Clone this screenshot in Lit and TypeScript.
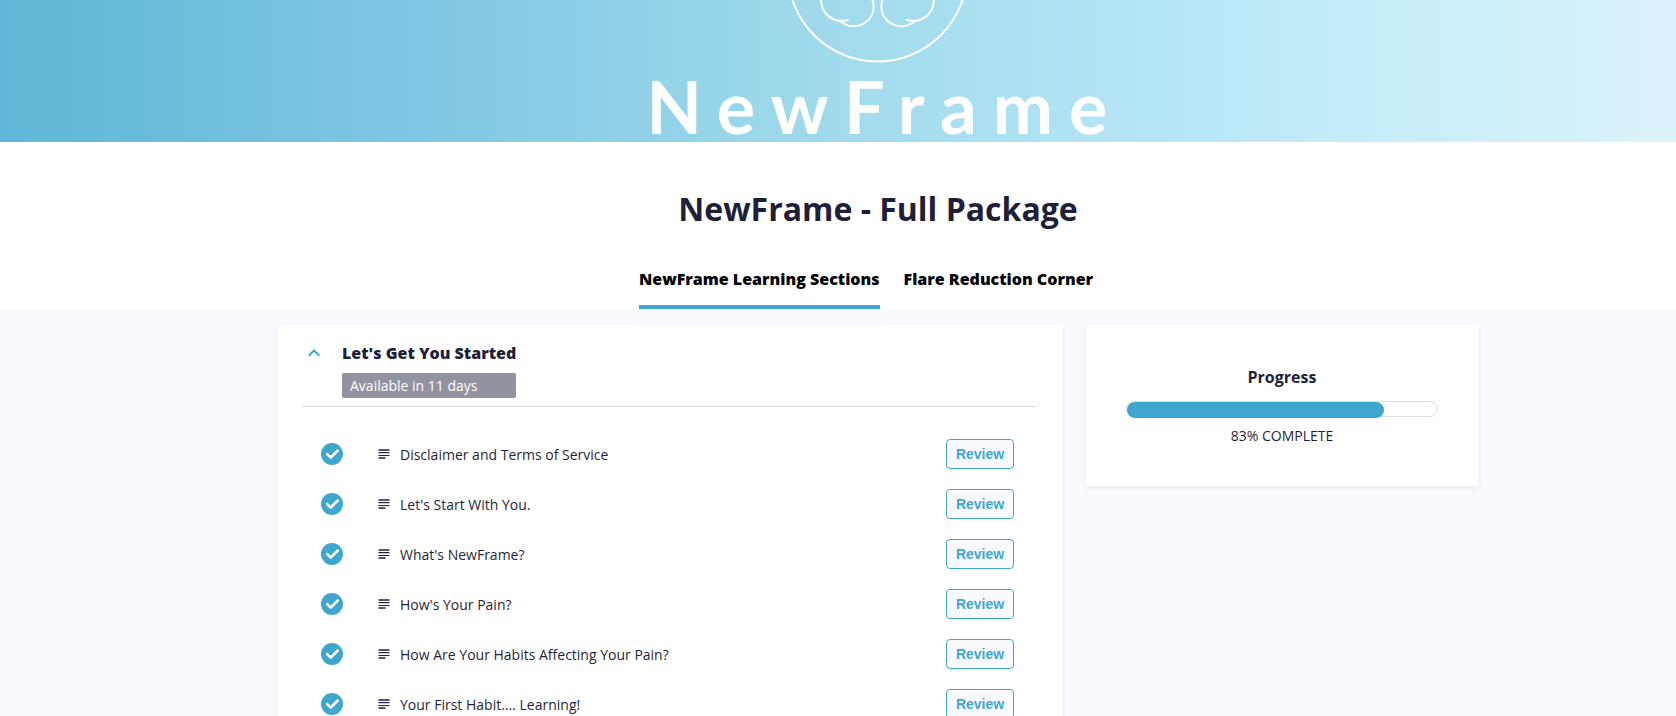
import { LitElement, html, css } from "lit";
import { customElement, property, state } from "lit/decorators.js";

const LESSONS = [
  "Disclaimer and Terms of Service",
  "Let's Start With You.",
  "What's NewFrame?",
  "How's Your Pain?",
  "How Are Your Habits Affecting Your Pain?",
  "Your First Habit.... Learning!",
];

@customElement("course-banner")
class CourseBanner extends LitElement {
  static styles = css`
    :host {
      display: flex;
      flex-direction: column;
      align-items: center;
      padding-left: 80px;
      color: #fff;
      background: linear-gradient(90deg, #5fb6d6 0%, #66bad9 5%, #8bcde6 34%, #9cd8ea 46%, #b9e8f6 72%, #c7edf9 83%, #dcf3fa 100%);
    }
    .emblem {
      display: block;
      flex: none;
      width: 180px;
      height: 70px;
    }
    .wordmark {
      font: 700 72px/72px Lato, sans-serif;
      letter-spacing: 16px;
      padding-left: 14px;
      white-space: nowrap;
    }
  `;

  render() {
    return html`
      <svg class="emblem" viewBox="0 0 180 70" fill="none" stroke="#fff" stroke-width="2" stroke-linecap="round" aria-hidden="true">
        <circle cx="89.500" cy="-28" r="89.500" />
        <path d="M33 0C33.500 13 44 24 60 20M53 22C68 32.500 87.500 22 85.500 4L84.500 0" />
        <path d="M146 0C145.500 13 135 24 119 20M126 22C111 32.500 91.500 22 93.500 4L94.500 0" />
      </svg>
      <div class="wordmark">NewFrame</div>
    `;
  }
}

@customElement("lesson-row")
class LessonRow extends LitElement {
  @property() name = "";

  static styles = css`
    :host {
      display: flex;
      align-items: center;
      height: 50px;
      padding: 0 24px 0 19px;
    }
    .done {
      flex: none;
      width: 22px;
      height: 22px;
      margin-right: 35px;
    }
    .kind {
      flex: none;
      width: 12px;
      height: 12px;
      margin-right: 10px;
    }
    .name {
      flex: 1;
      font-size: 14px;
      line-height: 20px;
      padding-top: 1px;
    }
    .review {
      box-sizing: border-box;
      width: 68px;
      height: 30px;
      padding: 0;
      border: 1px solid #3fa7ce;
      border-radius: 4px;
      background: #f9faff;
      color: #3fa7ce;
      font: 700 14px/28px "Liberation Sans", Arial, sans-serif;
      cursor: pointer;
    }
  `;

  render() {
    return html`
      <svg class="done" viewBox="0 0 22 22" role="img" aria-label="Completed">
        <circle cx="11" cy="11" r="11" fill="#3fa7ce" />
        <path d="M6.200 11.200L9.700 14.500L16.800 7.500" fill="none" stroke="#fff" stroke-width="2.500" stroke-linecap="round" stroke-linejoin="round" />
      </svg>
      <svg class="kind" viewBox="0 0 12 12" aria-hidden="true" fill="#1f1f39">
        <path d="M.5 1h11v2H.5z" opacity=".75" />
        <path d="M.5 4h11v1H.5zM.5 7h11v1H.5z" />
        <path d="M.5 5h11v1H.5z" opacity=".2" />
        <path d="M.5 9h7v2H.5z" opacity=".75" />
      </svg>
      <span class="name">${this.name}</span>
      <button class="review" type="button" aria-label="Review ${this.name}">Review</button>
    `;
  }
}

@customElement("progress-card")
class ProgressCard extends LitElement {
  @property({ type: Number }) value = 0;

  static styles = css`
    :host {
      display: block;
      box-sizing: border-box;
      padding: 40px;
      text-align: center;
      background: #fff;
      box-shadow: 0 2px 6px rgba(31, 31, 57, 0.07);
    }
    .title {
      margin: 0 0 12px;
      font-size: 16px;
      line-height: 24px;
      font-weight: 700;
    }
    .track {
      box-sizing: border-box;
      height: 16px;
      border: 1px solid #dfdfe2;
      border-radius: 8px;
    }
    .fill {
      height: 16px;
      border-radius: 8px;
      background: #3fa7ce;
    }
    .label {
      margin: 9px 0 0;
      font-size: 14px;
      line-height: 20px;
      text-transform: uppercase;
    }
  `;

  render() {
    return html`
      <h2 class="title" id="title">Progress</h2>
      <div class="track" role="progressbar" aria-labelledby="title" aria-valuemin="0" aria-valuemax="100" aria-valuenow=${this.value}>
        <div class="fill" style="width: ${this.value}%"></div>
      </div>
      <p class="label">${this.value}% Complete</p>
    `;
  }
}

@customElement("app-root")
class AppRoot extends LitElement {
  @state() private open = true;

  static styles = css`
    :host {
      display: block;
      min-height: 100vh;
      background: #f9faff;
      color: #1f1f39;
      font-family: "Open Sans", sans-serif;
    }
    .head {
      display: flex;
      flex-direction: column;
      align-items: center;
      padding: 43px 0 0 80px;
      background: #fff;
    }
    .title {
      margin: 0 0 29px;
      font-size: 32px;
      line-height: 48px;
      font-weight: 700;
    }
    .tabs {
      display: flex;
    }
    .tab {
      margin-right: 24px;
      padding: 5px 0 14px;
      border-bottom: 4px solid transparent;
      color: #000;
      font-size: 16px;
      line-height: 24px;
      font-weight: 800;
      text-decoration: none;
    }
    .tab.current {
      border-color: #3fa7ce;
    }
    .body {
      padding: 16px 0 0 80px;
    }
    .columns {
      display: grid;
      grid-template-columns: 2fr 1fr;
      gap: 24px;
      align-items: start;
      max-width: 1200px;
      margin: 0 auto;
    }
    .card {
      padding: 0 24px 24px;
      background: #fff;
      box-shadow: 0 2px 6px rgba(31, 31, 57, 0.07);
    }
    .section {
      display: flex;
      align-items: flex-start;
      padding: 16px 0 8px;
      border-bottom: 1px solid #dfdfe2;
    }
    .toggle {
      display: flex;
      justify-content: center;
      align-items: center;
      width: 24px;
      height: 24px;
      margin-right: 16px;
      padding: 0;
      border: 0;
      background: none;
      cursor: pointer;
    }
    .heading {
      margin: 0 0 8px;
      font-size: 16px;
      line-height: 24px;
      font-weight: 800;
    }
    .badge {
      padding: 0 8px;
      border-radius: 2px;
      background: #9293a0;
      color: #fff;
      font-size: 14px;
      line-height: 25px;
    }
    .lessons {
      margin: 0;
      padding: 22px 0 0;
      list-style: none;
    }
  `;

  render() {
    return html`
      <course-banner></course-banner>
      <header class="head">
        <h1 class="title">NewFrame - Full Package</h1>
        <nav class="tabs">
          <a class="tab current" href="#sections" aria-current="page">NewFrame Learning Sections</a>
          <a class="tab" href="#flare">Flare Reduction Corner</a>
        </nav>
      </header>
      <main class="body">
        <div class="columns">
          <section class="card">
            <div class="section">
              <button class="toggle" type="button" aria-label="Toggle section" aria-expanded=${this.open} @click=${() => (this.open = !this.open)}>
                <svg width="12" height="8" viewBox="0 0 12 8" fill="none" stroke="#3fa7ce" stroke-width="2">
                  <path d=${this.open ? "M.7 6.800L6 1.500L11.300 6.800" : "M.7 1.200L6 6.500L11.300 1.200"} />
                </svg>
              </button>
              <div>
                <h2 class="heading">Let's Get You Started</h2>
                <div class="badge">Available in 11 days</div>
              </div>
            </div>
            ${this.open
              ? html`<ul class="lessons">
                  ${LESSONS.map((name) => html`<li><lesson-row .name=${name}></lesson-row></li>`)}
                </ul>`
              : null}
          </section>
          <progress-card .value=${83}></progress-card>
        </div>
      </main>
    `;
  }
}
